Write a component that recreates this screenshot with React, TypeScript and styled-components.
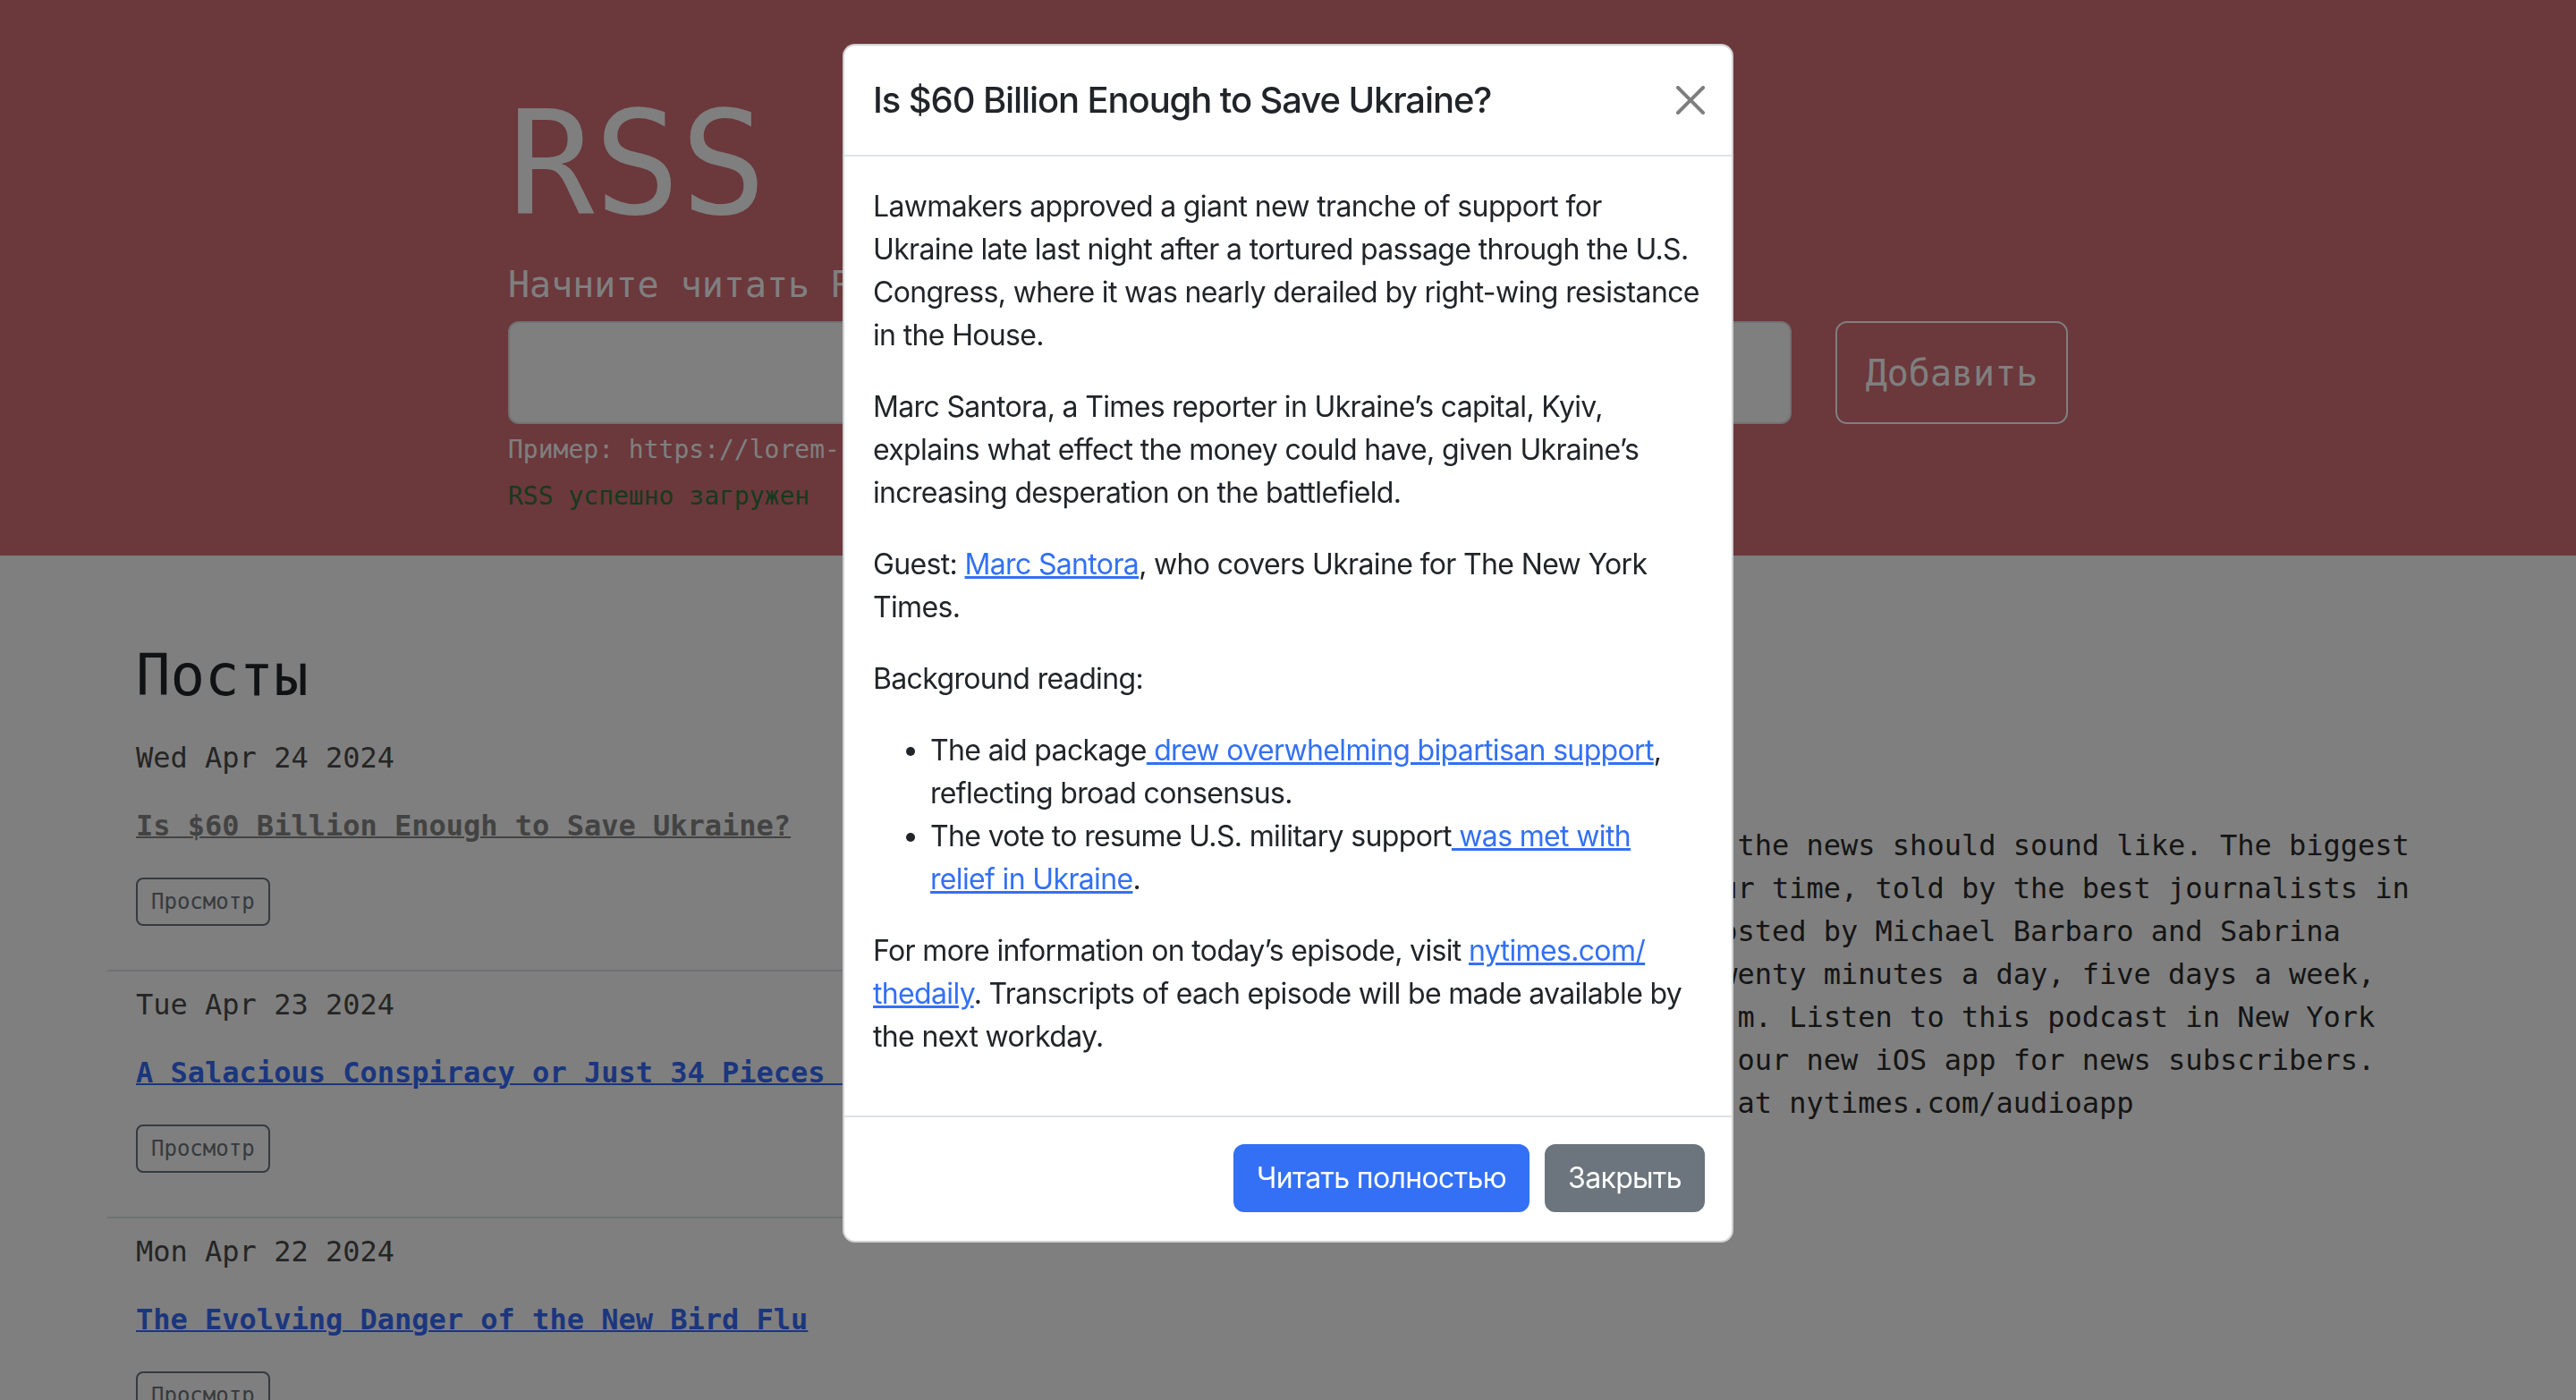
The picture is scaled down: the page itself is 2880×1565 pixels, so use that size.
import React from "react";
import styled, { createGlobalStyle } from "styled-components";

const mono = `"DejaVu Sans Mono", "Liberation Mono", monospace`;
const sans = `Inter, "Liberation Sans", Arial, sans-serif`;

const GlobalStyle = createGlobalStyle`
  html, body {
    margin: 0;
    padding: 0;
  }
  body {
    overflow: hidden;
    background: #fff;
    color: #212529;
    font-family: ${mono};
  }
  * {
    box-sizing: border-box;
  }
`;

type Post = { id: number; date: string; title: string; read: boolean };

const posts: Post[] = [
  { id: 1, date: "Wed Apr 24 2024", title: "Is $60 Billion Enough to Save Ukraine?", read: true },
  { id: 2, date: "Tue Apr 23 2024", title: "A Salacious Conspiracy or Just 34 Pieces of Paper?", read: false },
  { id: 3, date: "Mon Apr 22 2024", title: "The Evolving Danger of the New Bird Flu", read: false },
];

const feedDescription =
  "This is what the news should sound like. The biggest stories of our time, told by the best journalists in the world. Hosted by Michael Barbaro and Sabrina Tavernise. Twenty minutes a day, five days a week, ready by 6 a.m. Listen to this podcast in New York Times Audio, our new iOS app for news subscribers. Download now at nytimes.com/audioapp";

export default function App() {
  return (
    <>
      <GlobalStyle />
      <Hero>
        <HeroInner>
          <HeroTitle>RSS</HeroTitle>
          <Lead>Начните читать RSS сегодня! Это легко, это красиво.</Lead>
          <Form onSubmit={e => e.preventDefault()}>
            <UrlInput aria-label="url" autoComplete="off" />
            <AddButton type="submit">Добавить</AddButton>
          </Form>
          <Hint>Пример: https://lorem-rss.hexlet.app/feed</Hint>
          <Feedback>RSS успешно загружен</Feedback>
        </HeroInner>
      </Hero>

      <Main>
        <Column>
          <ColumnHeading>Посты</ColumnHeading>
          <List>
            {posts.map(post => (
              <PostItem key={post.id}>
                <PostDate>{post.date}</PostDate>
                <PostTitle>
                  <PostLink href="#" $read={post.read}>{post.title}</PostLink>
                </PostTitle>
                <ViewButton type="button">Просмотр</ViewButton>
              </PostItem>
            ))}
          </List>
        </Column>
        <Column>
          <ColumnHeading>Фиды</ColumnHeading>
          <List>
            <FeedItem>
              <FeedTitle>The Daily</FeedTitle>
              <FeedText>{feedDescription}</FeedText>
            </FeedItem>
          </List>
        </Column>
      </Main>

      <Backdrop />
      <ModalLayer>
        <Dialog role="dialog">
          <ModalHeader>
            <ModalTitle>Is $60 Billion Enough to Save Ukraine?</ModalTitle>
            <CloseButton type="button" aria-label="Close">
              <svg width="32" height="32" viewBox="0 0 16 16">
                <path
                  fill="#000"
                  d="M.293.293a1 1 0 0 1 1.414 0L8 6.586 14.293.293a1 1 0 1 1 1.414 1.414L9.414 8l6.293 6.293a1 1 0 0 1-1.414 1.414L8 9.414l-6.293 6.293a1 1 0 0 1-1.414-1.414L6.586 8 .293 1.707a1 1 0 0 1 0-1.414z"
                />
              </svg>
            </CloseButton>
          </ModalHeader>
          <ModalBody>
            <p>
              Lawmakers approved a giant new tranche of support for Ukraine late last night after a
              tortured passage through the U.S. Congress, where it was nearly derailed by right-wing
              resistance in the House.
            </p>
            <p>
              Marc Santora, a Times reporter in Ukraine’s capital, Kyiv, explains what effect the money
              could have, given Ukraine’s increasing desperation on the battlefield.
            </p>
            <p>
              Guest: <a href="#">Marc Santora</a>, who covers Ukraine for The New York Times.
            </p>
            <p>Background reading:</p>
            <ul>
              <li>
                The aid package<a href="#"> drew overwhelming bipartisan support</a>, reflecting broad
                consensus.
              </li>
              <li>
                The vote to resume U.S. military support<a href="#"> was met with relief in Ukraine</a>.
              </li>
            </ul>
            <p>
              For more information on today’s episode, visit <a href="#">nytimes.com/&#8203;thedaily</a>.
              Transcripts of each episode will be made available by the next workday.
            </p>
          </ModalBody>
          <ModalFooter>
            <ModalButton type="button" $variant="primary">Читать полностью</ModalButton>
            <ModalButton type="button" $variant="secondary">Закрыть</ModalButton>
          </ModalFooter>
        </Dialog>
      </ModalLayer>
    </>
  );
}

const Hero = styled.section`
  background: #d67078;
  padding: 88px 0 45px;
`;

const HeroInner = styled.div`
  width: 1744px;
  margin: 0 auto;
  color: #fff;
`;

const HeroTitle = styled.h1`
  margin: 0;
  font: 400 160px/1.2 ${mono};
`;

const Lead = styled.p`
  margin: 8px 0 11px;
  font: 400 40px/60px ${mono};
`;

const Form = styled.form`
  display: flex;
  gap: 49px;
  height: 115px;
`;

const UrlInput = styled.input`
  flex: 1;
  height: 100%;
  border: 2px solid #dee2e6;
  border-radius: 12px;
  background: #fff;
  font: 400 32px ${mono};
  outline: none;
`;

const AddButton = styled.button`
  width: 260px;
  height: 100%;
  border: 2px solid #fff;
  border-radius: 13px;
  background: transparent;
  color: #fff;
  font: 400 40px/1 ${mono};
  cursor: pointer;
`;

const Hint = styled.p`
  margin: 8px 0 0;
  font: 400 28px/42px ${mono};
`;

const Feedback = styled.p`
  margin: 10px 0 0;
  font: 400 28px/42px ${mono};
  color: #2d743a;
`;

const Main = styled.main`
  display: grid;
  grid-template-columns: 1540px 1100px;
  width: 2640px;
  margin: 0 auto;
  padding-top: 96px;
`;

const Column = styled.div`
  min-width: 0;
`;

const ColumnHeading = styled.h2`
  margin: 0 0 16px;
  padding: 0 32px;
  font: 400 64px/1.2 ${mono};
  color: #212529;
`;

const List = styled.ul`
  margin: 0;
  padding: 0;
  list-style: none;
`;

const PostItem = styled.li`
  padding: 13px 32px 49px;
  border-bottom: 2px solid #dee2e6;

  &:last-child {
    border-bottom: none;
  }
`;

const PostDate = styled.div`
  font: 400 32px/48px ${mono};
  color: #4a4a4a;
`;

const PostTitle = styled.div`
  margin-top: 28px;
  font: 700 32px/48px ${mono};
  white-space: nowrap;
`;

const PostLink = styled.a<{ $read: boolean }>`
  color: ${({ $read }) => ($read ? "#878787" : "#366dfc")};
  text-decoration: underline;
  text-decoration-thickness: 2px;
`;

const ViewButton = styled.button`
  display: block;
  margin-top: 34px;
  padding: 7px 15px;
  border: 2px solid #6c757d;
  border-radius: 8px;
  background: transparent;
  color: #6c757d;
  font: 400 24px/36px ${mono};
  cursor: pointer;
`;

const FeedItem = styled.li`
  padding: 14px 32px 32px;
`;

const FeedTitle = styled.h3`
  margin: 0 0 49px;
  font: 700 40px/48px ${mono};
  color: #212529;
`;

const FeedText = styled.p`
  margin: 0;
  font: 400 32px/48px ${mono};
  color: #2b2b2b;
`;

const Backdrop = styled.div`
  position: fixed;
  inset: 0;
  background: rgba(0, 0, 0, 0.5);
`;

const ModalLayer = styled.div`
  position: fixed;
  inset: 0;
  display: flex;
  justify-content: center;
  align-items: flex-start;
  padding-top: 49px;
`;

const Dialog = styled.div`
  width: 996px;
  background: #fff;
  border: 2px solid rgba(0, 0, 0, 0.175);
  border-radius: 14px;
  color: #212529;
  font-family: ${sans};
`;

const ModalHeader = styled.div`
  display: flex;
  align-items: center;
  justify-content: space-between;
  padding: 31px 32px;
  border-bottom: 2px solid #dee2e6;
`;

const ModalTitle = styled.h5`
  margin: 0;
  font: 500 40px/60px ${sans};
  letter-spacing: -1.1px;
`;

const CloseButton = styled.button`
  display: flex;
  align-items: center;
  justify-content: center;
  width: 48px;
  height: 48px;
  margin-right: -10px;
  padding: 0;
  border: none;
  background: transparent;
  opacity: 0.5;
  cursor: pointer;
`;

const ModalBody = styled.div`
  padding: 32px;
  font: 400 32px/48px ${sans};
  letter-spacing: -0.65px;

  p,
  ul {
    margin: 0 0 32px;
  }

  ul {
    padding: 0 8px 0 64px;
  }

  a {
    color: #3370f5;
    text-decoration: underline;
  }
`;

const ModalFooter = styled.div`
  display: flex;
  justify-content: flex-end;
  align-items: center;
  gap: 17px;
  padding: 30px 30px 32px;
  border-top: 2px solid #dee2e6;
`;

const ModalButton = styled.button<{ $variant: "primary" | "secondary" }>`
  padding: 12px 24px;
  border: 2px solid ${({ $variant }) => ($variant === "primary" ? "#3370f5" : "#6c757d")};
  border-radius: 12px;
  background: ${({ $variant }) => ($variant === "primary" ? "#3370f5" : "#6c757d")};
  color: #fff;
  font: 400 32px/48px ${sans};
  letter-spacing: -0.65px;
  cursor: pointer;
`;
